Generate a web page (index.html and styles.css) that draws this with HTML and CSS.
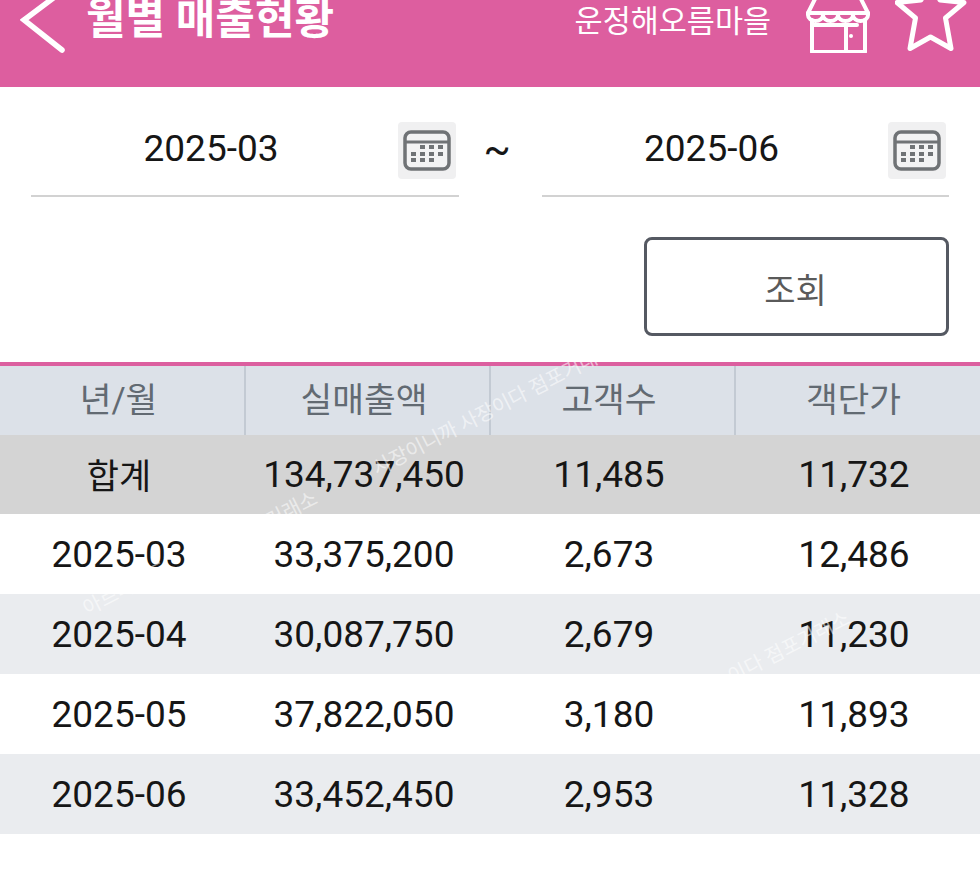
FILE: index.html
```html
<!DOCTYPE html>
<html lang="ko">
<head>
<meta charset="utf-8">
<title>월별 매출현황</title>
<link rel="stylesheet" href="styles.css">
</head>
<body>
<div class="page">
  <header class="topbar">
    <svg class="back" width="48" height="70" viewBox="0 0 48 70" aria-hidden="true"><path d="M44 5 L4 35 L42 65" fill="none" stroke="#fff" stroke-width="5.500" stroke-linecap="round" stroke-linejoin="miter"/></svg>
    <h1 class="title">월별 매출현황</h1>
    <span class="shop">운정해오름마을</span>
    <svg class="store" width="64" height="64" viewBox="0 0 64 64" aria-hidden="true">
      <g fill="none" stroke="#fff" stroke-width="4" stroke-linejoin="round" stroke-linecap="round">
        <path d="M9 10 L2 24 H62 L55 10"/>
        <path d="M2 24 V26 A7.500 6 0 0 0 17 26 A7.500 6 0 0 0 32 26 A7.500 6 0 0 0 47 26 A7.500 6 0 0 0 62 26 V24"/>
        <path d="M6 31 V63 H59 V31"/>
        <path d="M6 36 H51 M40 36 V63"/>
      </g>
      <circle cx="45" cy="47" r="2" fill="#fff"/>
    </svg>
    <svg class="star" width="72" height="66" viewBox="0 0 72 66" aria-hidden="true"><path d="M35.500 -9 L45 12 L69 14.500 L50.500 30 L56 60.500 L35.500 49 L15 60.500 L20.500 30 L2 14.500 L26 12 Z" fill="none" stroke="#fff" stroke-width="5" stroke-linejoin="round"/></svg>
  </header>

  <section class="dates">
    <div class="field field-from">
      <span class="date">2025-03</span>
      <span class="cal"><svg width="48" height="42" viewBox="0 0 48 42" aria-hidden="true"><rect x="2" y="2" width="44" height="37" rx="6" fill="#f3f3f4" stroke="#707376" stroke-width="3.500"/><path d="M2 12 H46" stroke="#707376" stroke-width="3"/><g fill="#707376"><rect x="17" y="15" width="5" height="4"/><rect x="26" y="15" width="5" height="4"/><rect x="35" y="15" width="5" height="4"/><rect x="8" y="22" width="5" height="4"/><rect x="17" y="22" width="5" height="4"/><rect x="26" y="22" width="5" height="4"/><rect x="35" y="22" width="5" height="4"/><rect x="8" y="28" width="5" height="4"/><rect x="17" y="28" width="5" height="4"/><rect x="26" y="28" width="5" height="4"/></g></svg></span>
    </div>
    <span class="tilde">~</span>
    <div class="field field-to">
      <span class="date">2025-06</span>
      <span class="cal"><svg width="48" height="42" viewBox="0 0 48 42" aria-hidden="true"><rect x="2" y="2" width="44" height="37" rx="6" fill="#f3f3f4" stroke="#707376" stroke-width="3.500"/><path d="M2 12 H46" stroke="#707376" stroke-width="3"/><g fill="#707376"><rect x="17" y="15" width="5" height="4"/><rect x="26" y="15" width="5" height="4"/><rect x="35" y="15" width="5" height="4"/><rect x="8" y="22" width="5" height="4"/><rect x="17" y="22" width="5" height="4"/><rect x="26" y="22" width="5" height="4"/><rect x="35" y="22" width="5" height="4"/><rect x="8" y="28" width="5" height="4"/><rect x="17" y="28" width="5" height="4"/><rect x="26" y="28" width="5" height="4"/></g></svg></span>
    </div>
  </section>

  <div class="actions"><button class="search" type="button">조회</button></div>

  <section class="sales">
    <div class="row head"><div class="cell">년/월</div><div class="cell">실매출액</div><div class="cell">고객수</div><div class="cell">객단가</div></div>
    <div class="row total"><div class="cell">합계</div><div class="cell">134,737,450</div><div class="cell">11,485</div><div class="cell">11,732</div></div>
    <div class="row"><div class="cell">2025-03</div><div class="cell">33,375,200</div><div class="cell">2,673</div><div class="cell">12,486</div></div>
    <div class="row alt"><div class="cell">2025-04</div><div class="cell">30,087,750</div><div class="cell">2,679</div><div class="cell">11,230</div></div>
    <div class="row"><div class="cell">2025-05</div><div class="cell">37,822,050</div><div class="cell">3,180</div><div class="cell">11,893</div></div>
    <div class="row alt"><div class="cell">2025-06</div><div class="cell">33,452,450</div><div class="cell">2,953</div><div class="cell">11,328</div></div>
  </section>

  <span class="mark mark-a">사장이니까 사장이다 점포거래소</span>
  <span class="mark mark-b">점포거래소</span>
  <span class="mark mark-c">아르바이트</span>
  <span class="mark mark-d">이다 점포거래소</span>
</div>
</body>
</html>
```
FILE: styles.css
```css
* { box-sizing: border-box; }
html, body { margin: 0; padding: 0; }
body {
  width: 980px;
  height: 872px;
  overflow: hidden;
  background: #fff;
  font-family: Roboto, "Noto Sans CJK KR", sans-serif;
  color: #161616;
}
.page { position: relative; width: 980px; height: 872px; overflow: hidden; }

.topbar {
  height: 87px;
  padding: 0 13px 47px 20px;
  background: #dd5e9f;
  color: #fff;
  display: flex;
  align-items: center;
}
.back { flex: none; margin-right: 18px; }
.title {
  margin: -3px 0 0;
  font-size: 43px;
  font-weight: 700;
  line-height: 40px;
  white-space: nowrap;
  flex: 1;
}
.shop { font-size: 30.500px; line-height: 40px; margin: 4px 35px 0 0; white-space: nowrap; }
.store { flex: none; margin: 0 25px 0 0; transform: translateY(1px); }
.star { flex: none; margin: 0; transform: translateY(1px); }

.dates { display: flex; padding: 22px 31px 0; align-items: flex-end; }
.field {
  display: flex;
  align-items: center;
  height: 88px;
  border-bottom: 2px solid #d2d2d2;
  padding: 13px 3px 16px 0;
}
.field-from { width: 428px; }
.field-to { width: 407px; }
.date { flex: 1; text-align: center; font-size: 37px; line-height: 46px; padding-right: 7px; margin-top: -4px; }
.cal {
  flex: none;
  width: 58px;
  height: 57px;
  background: #f0f0f1;
  border-radius: 4px;
  display: flex;
  align-items: center;
  justify-content: center;
}
.tilde { width: 83px; padding-right: 7px; text-align: center; font-size: 40px; line-height: 46px; align-self: flex-start; margin-top: 18px; }

.actions { display: flex; justify-content: flex-end; padding: 40px 31px 0 0; }
.search {
  width: 305px;
  height: 99px;
  background: #fff;
  border: 3px solid #555962;
  border-radius: 8px;
  font-family: inherit;
  font-size: 34px;
  color: #5a5a5a;
  padding: 3px 2px 0 0;
}

.sales { margin-top: 26px; border-top: 4px solid #dc5f9f; }
.row { display: grid; grid-template-columns: repeat(4, 245px); height: 80px; }
.row.head { grid-template-columns: 246px 245px 245px 244px; height: 69px; background: #dce1e8; color: #626a72; }
.row.head .cell { font-size: 34.500px; padding-bottom: 7px; border-right: 2px solid #c3cad3; }
.row.head .cell:last-child { border-right-color: transparent; }
.row.total { height: 79px; background: #d4d4d4; }
.row.total .cell:first-child { font-size: 35px; padding-bottom: 3px; }
.row.alt { background: #eaecef; }
.cell {
  display: flex;
  align-items: center;
  justify-content: center;
  font-size: 37px;
  padding-right: 7px;
  white-space: nowrap;
}

.mark {
  position: absolute;
  color: rgba(255, 255, 255, .55);
  font-size: 20px;
  white-space: nowrap;
  transform: rotate(-27deg);
  transform-origin: left bottom;
}
.mark-a { left: 380px; top: 452px; }
.mark-b { left: 240px; top: 521px; }
.mark-c { left: 90px; top: 592px; }
.mark-d { left: 735px; top: 660px; }
```
